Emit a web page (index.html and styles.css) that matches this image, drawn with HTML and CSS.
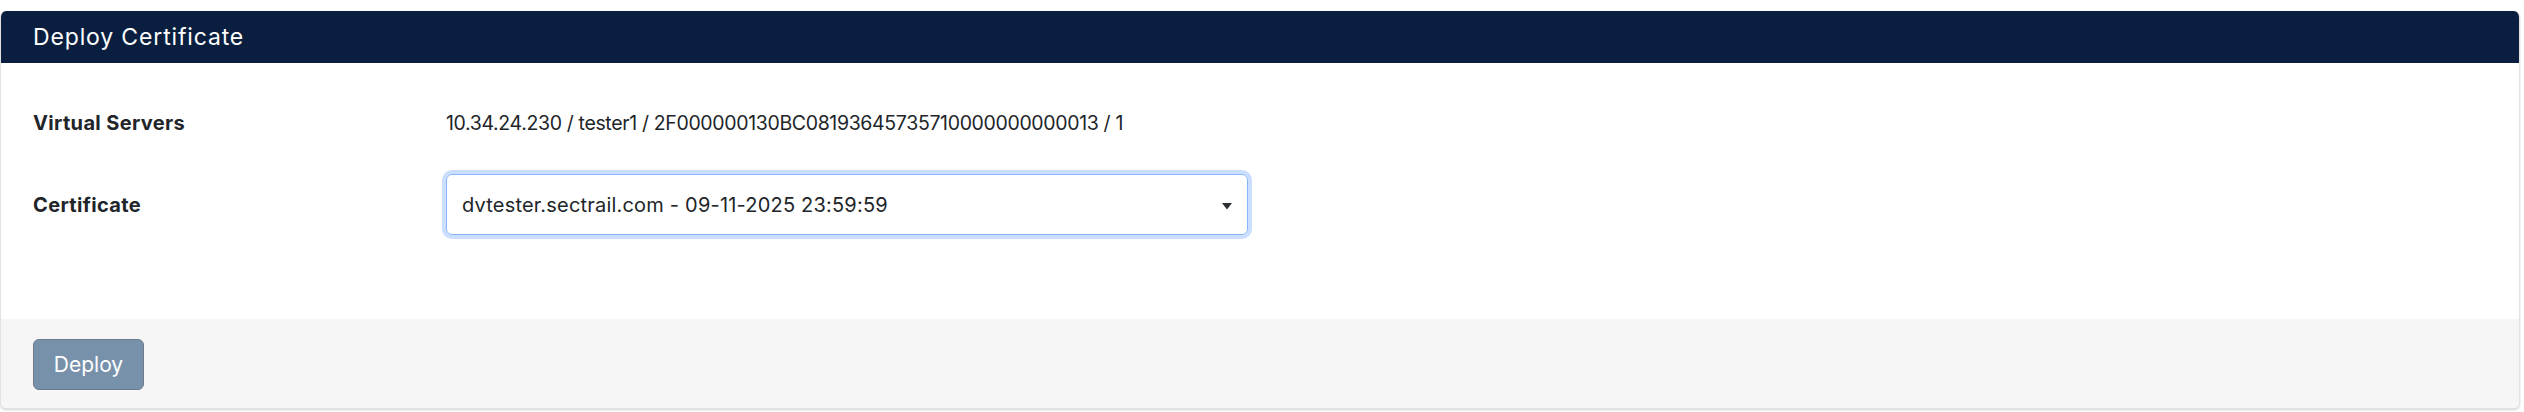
FILE: index.html
```html
<!DOCTYPE html>
<html lang="en">
<head>
<meta charset="utf-8">
<title>Deploy Certificate</title>
<link rel="stylesheet" href="styles.css">
</head>
<body>
<div class="page">
  <div class="card">
    <div class="card-header">Deploy Certificate</div>
    <div class="card-body">
      <div class="row row-first">
        <div class="label">Virtual Servers</div>
        <div class="value">10.34.24.230 / tester1 / 2F000000130BC08193645735710000000000013 / 1</div>
      </div>
      <div class="row">
        <div class="label">Certificate</div>
        <div class="select">
          <span class="select-text">dvtester.sectrail.com - 09-11-2025 23:59:59</span>
          <svg class="caret" width="10" height="7" viewBox="0 0 10 7"><path d="M0 0H10L5 6.5Z" fill="#2b2f33"/></svg>
        </div>
      </div>
    </div>
    <div class="card-footer">
      <button class="btn">Deploy</button>
    </div>
  </div>
</div>
</body>
</html>
```

FILE: styles.css
```css
html, body {
  margin: 0;
  padding: 0;
  background: #ffffff;
}
body {
  font-family: Inter, "Noto Sans", "Liberation Sans", sans-serif;
  color: #212529;
}
.page {
  padding: 11px 4px 4px 0;
}
.card {
  border: 1px solid #e2e2e2;
  border-top: none;
  border-radius: 6px;
  box-shadow: 0 1px 2px rgba(0, 0, 0, 0.18);
  overflow: hidden;
  background: #fff;
}
.card-header {
  background: #0a1f3f;
  color: #ffffff;
  height: 52px;
  display: flex;
  align-items: center;
  padding-left: 32px;
  font-size: 23px;
  font-weight: 400;
  letter-spacing: 0.85px;
}
.card-body {
  padding: 45px 32px 84px 32px;
  display: flex;
  flex-direction: column;
  gap: 36px;
}
.row {
  display: grid;
  grid-template-columns: 413px 802px;
  align-items: center;
}
.row-first {
  height: 30px;
}
.label {
  font-weight: 700;
  font-size: 20px;
  line-height: 30px;
  letter-spacing: 0.35px;
}
.value {
  font-size: 19.5px;
  line-height: 30px;
  letter-spacing: -0.35px;
}
.select {
  box-sizing: border-box;
  height: 61px;
  border: 1px solid #86b7fe;
  border-radius: 6px;
  box-shadow: 0 0 0 4px rgba(13, 110, 253, 0.22);
  display: flex;
  align-items: center;
  justify-content: space-between;
  padding: 0 15px 0 15px;
  font-size: 20px;
  letter-spacing: 0.2px;
}
.caret {
  display: block;
  margin-top: 4px;
}
.card-footer {
  background: #f6f6f6;
  padding: 20px 32px 18px 32px;
}
.btn {
  display: block;
  box-sizing: border-box;
  width: 111px;
  height: 51px;
  background: #7891aa;
  border: 1px solid #6b7b8c;
  border-radius: 6px;
  color: #ffffff;
  font-family: Inter, "Noto Sans", "Liberation Sans", sans-serif;
  font-size: 21px;
  padding: 0;
}
```
